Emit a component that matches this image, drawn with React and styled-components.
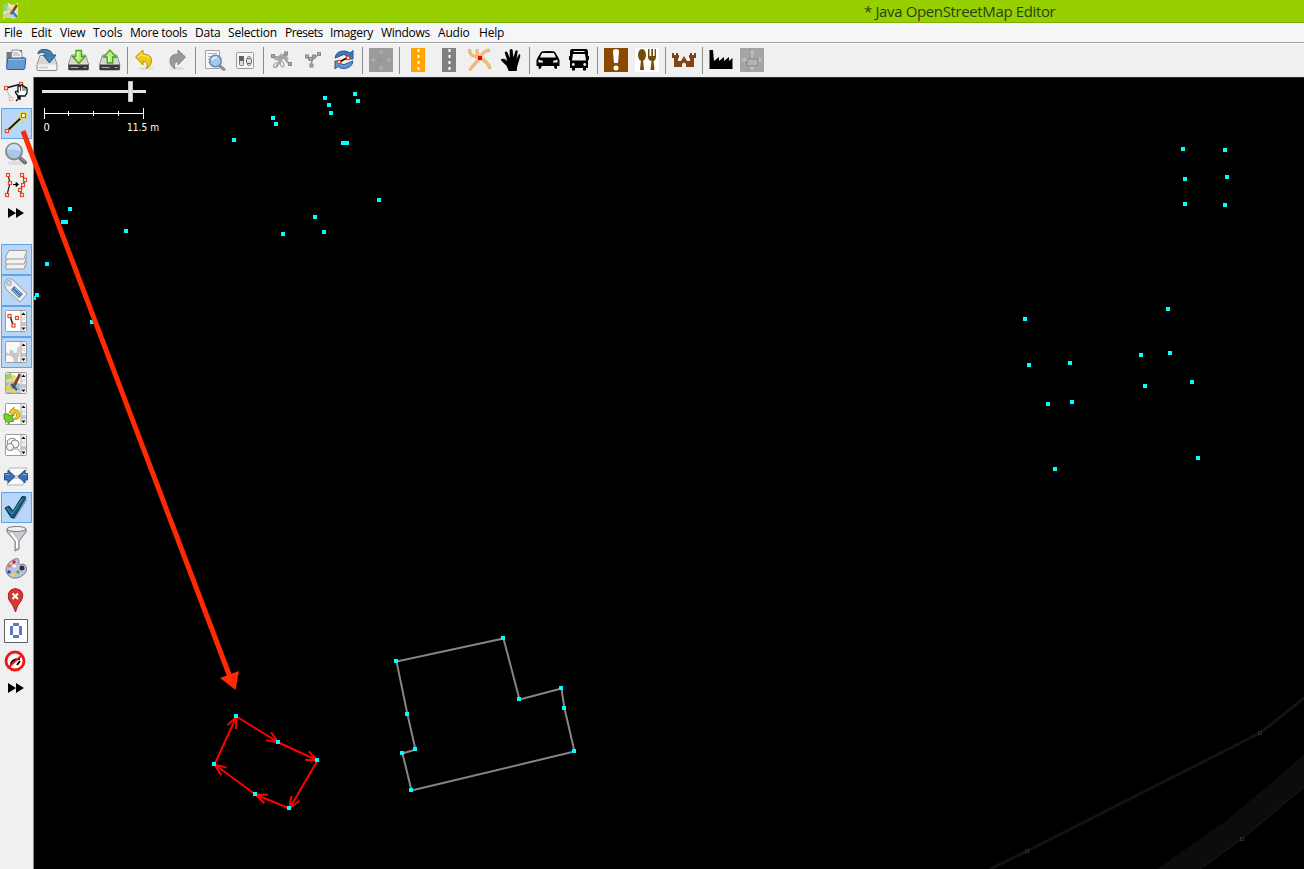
import React from "react";
import styled, { createGlobalStyle, css } from "styled-components";

const GlobalStyle = createGlobalStyle`
  * { box-sizing: border-box; }
  body { margin: 0; overflow: hidden; background: #000; }
`;

const Window = styled.div`
  position: relative;
  display: flex;
  flex-direction: column;
  width: 1304px;
  height: 869px;
  overflow: hidden;
  font-family: "Open Sans", "Noto Sans", sans-serif;
`;

const TitleBar = styled.header`
  display: flex;
  align-items: center;
  height: 23px;
  flex: none;
  padding-left: 3px;
  background: #96d000;
  border-bottom: 1px solid #78b000;
`;

const Title = styled.h1`
  margin: 0 0 0 845px;
  font-size: 15px;
  font-weight: 400;
  line-height: 22px;
  color: #2f4013;
  white-space: nowrap;
  letter-spacing: ${(p) => p.$spacing}px;
`;

const MenuBar = styled.nav`
  display: flex;
  flex: none;
  height: 20px;
  padding-left: 4px;
  background: #f5f6f8;
  border-bottom: 1px solid #a0a0a0;
`;

const MenuItem = styled.span`
  flex: none;
  width: ${(p) => p.$width}px;
  font-size: 12px;
  line-height: 19px;
  letter-spacing: ${(p) => p.$spacing}px;
  color: #000;
  white-space: nowrap;
`;

const Toolbar = styled.div`
  display: flex;
  align-items: center;
  flex: none;
  height: 34px;
  background: #f0f0f0;
  border-top: 1px solid #fff;
`;

const ToolButton = styled.div`
  display: flex;
  flex: none;
  width: 31px;
  height: 33px;
  padding: 4px 3px 5px 4px;
`;

const Separator = styled.i`
  flex: none;
  width: 1px;
  height: 27px;
  margin: 0 2px 0 3px;
  background: #8c8c8c;
`;

const Workspace = styled.main`
  display: flex;
  flex: 1;
  min-height: 0;
`;

const Sidebar = styled.aside`
  display: flex;
  flex-direction: column;
  flex: none;
  width: 34px;
  padding-left: 1px;
  background: #f0f0f0;
  border-right: 1px solid #8a8a8a;
`;

const SideButton = styled.div`
  flex: none;
  width: 31px;
  height: 31px;
  ${(p) => p.$active && css`
    background: #b8d6f8;
    box-shadow: inset 0 0 0 1px #5ea4e6;
  `}
`;

const MoreButton = styled.div`
  flex: none;
  height: 25px;
  margin: ${(p) => p.$margin};
`;

const MapView = styled.section`
  flex: 1;
  background: #000;
  border-top: 1px solid #2a2d30;
`;

const Drawing = styled.svg`
  display: block;
`;

const Annotation = styled.svg`
  position: absolute;
  left: 0;
  top: 0;
  pointer-events: none;
`;

const Icon24 = ({ children }) => (
  <Drawing width="24" height="24" viewBox="0 0 24 24" fill="none">{children}</Drawing>
);
const Icon31 = ({ children }) => (
  <Drawing width="31" height="31" viewBox="0 0 31 31" fill="none">{children}</Drawing>
);

const Node = ({ x, y, s = 3, color = "#e8481c" }) => (
  <rect x={x - s / 2} y={y - s / 2} width={s} height={s} fill="#fff" stroke={color} strokeWidth="1.2" />
);

const Drive = ({ dark }) => (
  <>
    <path d="M5 7H19L22 16V21Q22 22 21 22H3Q2 22 2 21V16Z" fill="#e9e9e9" stroke="#8b8b8b" />
    <path d="M5.5 8H18.500L21 15.500H3Z" fill="#d5d5d5" />
    {dark ? <path d="M2 16.500H22V22H2Z" fill="#343b3d" /> : <path d="M3 17H21V21H3Z" fill="#f6f6f6" />}
    {dark ? <path d="M4 19.500H12M17 19.500H20" stroke="#aaa" /> : <path d="M4.500 19H13" stroke="#aaa" strokeWidth="2" strokeDasharray="1 1" />}
  </>
);

const FolderIcon = () => (
  <Icon24>
    <path d="M2.500 4H8L9 2H18V9H20V20H2.500Z" fill="#777" />
    <path d="M8 2H15L18 5V14H7Z" fill="#f3f3f3" stroke="#8d8d8d" />
    <path d="M9 5H14M9 7H16" stroke="#a8a8a8" />
    <path d="M3.500 11Q3.500 10 4.500 10H21Q22 10 21.800 11L20.800 20.500Q20.600 21.500 19.500 21.500H3.500Q2.500 21.500 2.500 20.500Z" fill="#699bd2" stroke="#2f5f99" />
    <path d="M4.500 11.500H20.500" stroke="#9fc4ec" />
  </Icon24>
);
const OpenLocationIcon = () => (
  <Icon24>
    <g transform="translate(0 .5)"><Drive /></g>
    <path d="M3 6Q3 1.500 9 1.500Q17 1.500 17.500 7H21L14.500 15L8 7H11.500Q10.500 4.500 7 4.500Q4.500 4.500 3 6Z" fill="#4380b3" stroke="#245982" />
  </Icon24>
);
const DownloadIcon = () => (
  <Icon24>
    <g transform="translate(.5 0)"><Drive dark />
      <path d="M9.500 2.500H15V8.500H18.500L12.200 15.500L6 8.500H9.500Z" fill="#b9ec82" stroke="#4fa312" strokeWidth="1.400" />
      <path d="M11 4V10" stroke="#e4ffc5" strokeWidth="1.500" /></g>
  </Icon24>
);
const UploadIcon = () => (
  <Icon24>
    <g transform="translate(.7 0)"><Drive dark />
      <path d="M9.500 15V9H6L12.200 2L18.500 9H15V15Z" fill="#b9ec82" stroke="#4fa312" strokeWidth="1.400" />
      <path d="M11 8V13.500" stroke="#e4ffc5" strokeWidth="1.500" /></g>
  </Icon24>
);
const UndoIcon = () => (
  <Icon24>
    <ellipse cx="12" cy="20.500" rx="8" ry="1.500" fill="#ddd" />
    <path d="M1.500 9L9 2V6Q18 6 17.500 13.500Q17.300 18 12.500 20.500Q15 14.500 9 13V17Z" fill="#edcc1c" stroke="#b88e00" />
    <path d="M4 9L8 5.500V7.500Q14 7.500 15.500 11" stroke="#fff17c" />
  </Icon24>
);
const RedoIcon = () => (
  <Icon24>
    <ellipse cx="12" cy="20.500" rx="8" ry="1.500" fill="#ddd" />
    <path d="M20.500 9L13 2V6Q5 6 5 13Q5 18 10 20.500Q8 14.500 13 13V17Z" fill="#999" stroke="#858585" />
  </Icon24>
);
const SearchPageIcon = () => (
  <Icon24>
    <path d="M3.500 2.500H17.500V20.500H3.500Z" fill="#f7f7f7" stroke="#a5a5a5" />
    <path d="M6 5.500H15M6 8.500H10M6 11.500H9M6 14.500H9" stroke="#b5b5b5" />
    <path d="M18 18L22 21.500" stroke="#909090" strokeWidth="3" strokeLinecap="round" />
    <circle cx="13.500" cy="13" r="5.800" fill="#a9c8eb" stroke="#658abb" strokeWidth="1.500" />
    <path d="M10 12Q11 9 15 9.500" stroke="#edf5ff" strokeWidth="1.500" />
  </Icon24>
);
const PreferencesIcon = () => (
  <Icon24>
    <rect x="3.500" y="4.500" width="17" height="16" rx="1" fill="#f5f5f5" stroke="#9c9c9c" />
    <rect x="6.500" y="8.500" width="4" height="9" rx="1" fill="#ddd" stroke="#777" />
    <rect x="6" y="8" width="5" height="5" fill="#616161" />
    <rect x="14.500" y="8.500" width="3" height="9" rx="1" fill="#ddd" stroke="#777" />
    <rect x="13.500" y="10.500" width="5" height="5" rx="1" fill="#ddd" stroke="#666" />
  </Icon24>
);
const SplitIcon = () => (
  <Icon24>
    <path d="M2 8L14 10L20 17M16 5L6 19M9 11L16 5L17 14" stroke="#999" strokeWidth="1.500" />
    <path d="M4 10L11 13M12 6L7 11M12 9Q16 8 18 11" stroke="#a8a8a8" strokeWidth="2" />
    <ellipse cx="6" cy="17" rx="3" ry="1.700" transform="rotate(-45 6 17)" stroke="#999" />
    <ellipse cx="12" cy="16" rx="1.700" ry="3" transform="rotate(-20 12 16)" stroke="#999" />
    {[[3, 8], [16, 5.500], [20, 16]].map(([x, y]) => <rect key={x} x={x - 1.500} y={y - 1.500} width="3" height="3" fill="#aaa" stroke="#888" />)}
  </Icon24>
);
const CombineIcon = () => (
  <Icon24>
    <path d="M6 9L11 12L18 6M11 12L10 18M7 12L14 7" stroke="#999" strokeWidth="1.500" />
    {[[6, 8.500], [10, 11], [10.500, 17.500], [13, 8.500], [18, 6]].map(([x, y]) => <rect key={x} x={x - 1.500} y={y - 1.500} width="3" height="3" fill="#aaa" stroke="#888" />)}
  </Icon24>
);
const SyncIcon = () => (
  <Icon24>
    <path d="M3 10Q4 3 12 3Q16 3 18 5L21 2.500V11H13L15.500 8Q12 5 8 8Q6 9 3 10Z" fill="#3e76bb" stroke="#28578f" />
    <path d="M21 13Q20 20 12 20.500Q8 20.500 6 18.500L3 21V13H10L8 15.500Q12 18 16 15Z" fill="#6097d6" stroke="#28578f" />
    <path d="M7 14L17 9" stroke="#000" strokeWidth="1.500" />
    <Node x={7} y={14} /><Node x={16} y={10} />
  </Icon24>
);
const MutedPadIcon = ({ box }) => (
  <Icon24>
    <path d="M0 0H24V24H0Z" fill={box ? "#a5a5a5" : "#9b9b9b"} />
    <path d="M0 18Q8 9 24 13M8 24Q12 12 10 0" stroke="#959595" />
    <path d="M12 1.500L15 5H13V7H11V5H9ZM12 22.500L9 19H11V17H13V19H15ZM1.500 12L5 9V11H7V13H5V15ZM22.500 12L19 15V13H17V11H19V9Z" fill={box ? "#bdbdbd" : "#acacac"} />
    {box && <><path d="M11 5H13V10H11Z" fill="#bdbdbd" /><path d="M7 13L9 11H18V16L16 18H7Z" fill="#b4b4b4" stroke="#858585" /></>}
  </Icon24>
);
const RoadIcon = ({ color }) => (
  <Icon24>
    <path d="M5 0H19V24H5Z" fill={color} />
    <path d="M12.500 1V24" stroke="#fff" strokeWidth="2" strokeDasharray="3 3" />
  </Icon24>
);
const JunctionIcon = () => (
  <Icon24>
    <path d="M1.500 1Q2 8 6 8L12 10M9 1Q8.500 7 12 10M12 10Q20 13 22 21M12 10L1.500 22M12 10Q14 5 18 3L22 2" stroke="#d9a064" strokeWidth="3" />
    <path d="M1.500 1Q2 8 6 8L12 10M9 1Q8.500 7 12 10M12 10Q20 13 22 21M12 10L1.500 22M12 10Q14 5 18 3L22 2" stroke="#f8bd7b" strokeWidth="2" />
    <path d="M10 8H14V12H10Z" fill="#f00" />
  </Icon24>
);
const HandIcon = () => (
  <Icon24>
    <path d="M9 23L7 18L1 12Q2 10 5 11L7.500 13L5 4.500Q6.500 2.500 8 5L10 10L10 2Q11.500 0 13 2L13.500 9.500L16 2.500Q17.500 1.500 18 3.500L16.800 11L19 6.500Q21 5.500 20.500 8.500L18 17Q17 20 17 23Z" transform="translate(.7)" fill="#000" />
  </Icon24>
);
const CarIcon = () => (
  <Icon24>
    <path d="M2 9L5 4Q6 3 12 3Q18 3 19 4L22 9L23.500 12V18H21V20.500Q18 22 18 18H5.500Q5.500 22 2.500 20.500V18H.5V12Z" fill="#000" />
    <path d="M6 5H18L20 9.500H4Z" fill="#f0f0f0" />
    <path d="M2.500 11.500L7 13V14.500H2.500ZM21.500 11.500L17 13V14.500H21.500Z" fill="#f0f0f0" />
  </Icon24>
);
const BusIcon = () => (
  <Icon24>
    <path d="M5 1H19Q21 1 21 4V8H22V12H21V20H19V22.500H16V20H8V22.500H5V20H3V12H2V8H3V4Q3 1 5 1Z" fill="#000" />
    <path d="M6.500 3H17.500V4H6.500ZM6 6H18L19 12.500H5Z" fill="#f0f0f0" />
    <circle cx="6.300" cy="16.500" r="1.400" fill="#f0f0f0" /><circle cx="17.700" cy="16.500" r="1.400" fill="#f0f0f0" />
  </Icon24>
);
const WarningIcon = () => (
  <Icon24>
    <path d="M0 0H24V24H0Z" fill="#8c4a00" />
    <path d="M9 3.500Q9 1 12 1Q15 1 15 3.500L14 15H10Z" fill="#fff" /><circle cx="12" cy="20" r="2.500" fill="#fff" />
  </Icon24>
);
const FoodIcon = () => (
  <Icon24>
    <path d="M0 0H24V24H0Z" fill="#fff" />
    <ellipse cx="7" cy="7" rx="4" ry="6" fill="#734a08" />
    <path d="M6 12H8L9 22H5Z" fill="#734a08" />
    <path d="M13 1H14.500V8H16.300V1H18V8H19.700V1H21V9Q21 12 18.500 13L19.500 22H15.500L16.500 13Q13 12 13 9Z" fill="#734a08" />
  </Icon24>
);
const CastleIcon = () => (
  <Icon24>
    <path d="M0 5H2V7H4V5H6V7H7V10H6V13H9L12 8L15 13H18V10H17V7H18V5H20V7H22V5H24V10H22V19H14V16Q12 13 10 16V19H2V10H0Z" fill="#834415" />
  </Icon24>
);
const FactoryIcon = () => (
  <Icon24><path d="M.5 21V2H4L5 13L10 9V13L15 9V13L20 9V13L23.500 10V21Z" fill="#000" /></Icon24>
);

const toolbarGroups = [
  [<FolderIcon />, <OpenLocationIcon />, <DownloadIcon />, <UploadIcon />],
  [<UndoIcon />, <RedoIcon />],
  [<SearchPageIcon />, <PreferencesIcon />],
  [<SplitIcon />, <CombineIcon />, <SyncIcon />],
  [<MutedPadIcon />],
  [<RoadIcon color="#ffa500" />, <RoadIcon color="#808080" />, <JunctionIcon />, <HandIcon />],
  [<CarIcon />, <BusIcon />],
  [<WarningIcon />, <FoodIcon />],
  [<CastleIcon />],
  [<FactoryIcon />, <MutedPadIcon box />],
];

const SelectToolIcon = () => (
  <Icon31>
    <path d="M5 11L20 7" stroke="#111" strokeWidth="1.500" /><path d="M5 11L10 22" stroke="#c8c8c8" strokeWidth="1.500" />
    <Node x={10} y={22} color="#efb6ac" /><Node x={5} y={11} /><Node x={20} y={7} />
    <path d="M17 19L14.500 15.500Q14 13.500 16.500 14.500L17 15V9.500Q18.500 8 19.500 9.500V8.500Q21 7 22 8.500V9.500Q23.500 8.500 24 10.500Q26 10 26 12V16L24 19Z" fill="#fff" stroke="#111" strokeWidth="1.300" />
    <path d="M19.500 9V14M22 9V14M24 10V14" stroke="#222" strokeWidth=".8" />
    <path d="M15 24L19 20M16 20H19V23" stroke="#000" strokeWidth="1.300" />
  </Icon31>
);
const DrawToolIcon = () => (
  <Icon31>
    <path d="M7 22L22.500 7.500" stroke="#dfe16a" strokeWidth="4" /><path d="M6 23L22.500 7.500" stroke="#111133" strokeWidth="1.800" />
    <path d="M19 4H26V11H19Z" fill="#e0df62" />
    <Node x={6} y={23} /><Node x={22.500} y={7.500} s={4} color="#c36a18" />
  </Icon31>
);
const ZoomToolIcon = () => (
  <Icon31>
    <ellipse cx="14" cy="24" rx="8" ry="2" fill="#ddd" />
    <path d="M19 19L24 23.500" stroke="#6e6e6e" strokeWidth="4" strokeLinecap="round" />
    <path d="M20 19L24 22.500" stroke="#aaa" strokeWidth="1" />
    <circle cx="13" cy="12.500" r="8" fill="#a9c7e7" stroke="#858b91" strokeWidth="2" />
    <path d="M6 12Q10 9 20 12A7 7 0 0 0 6 12Z" fill="#ccdef1" />
  </Icon31>
);
const ImproveToolIcon = () => {
  const left = [[7, 5], [9, 13], [6, 25]];
  const right = [[21, 5], [24, 10], [22, 15], [19, 20], [21, 25]];
  return (
    <Icon31>
      <path d={`M${left.join("L")}M${right.join("L")}`} stroke="#222" strokeWidth="1.200" />
      {[...left, ...right].map(([x, y]) => <Node key={`${x}-${y}`} x={x} y={y} />)}
      <path d="M12 14.500H17M15 12.500L17.500 14.500L15 16.500Z" stroke="#000" fill="#000" />
    </Icon31>
  );
};
const MoreIcon = () => (
  <Drawing width="31" height="25" viewBox="0 0 31 25"><path d="M7 7L15 12L7 17ZM15 7L23 12L15 17Z" fill="#000" /></Drawing>
);
const LayersIcon = () => (
  <Icon31>
    {[16.500, 11.500, 6.500].map((y) => (
      <path key={y} d={`M8 ${y}H24.500Q26 ${y} 25.500 ${y + 1.500}L23 ${y + 8.500}H6Q4 ${y + 8} 4.500 ${y + 6.500}Z`} fill="#f2f2f2" stroke="#999" />
    ))}
  </Icon31>
);
const TagIcon = () => (
  <Icon31>
    <path d="M4 7L6 4Q10 3 12 5L26 19L19 27L5 14Q3 11 4 7Z" fill="#eee" stroke="#9b9b9b" />
    <circle cx="8" cy="8" r="2.500" fill="#c4daef" stroke="#9aa7b8" />
    <path d="M13 11L22 19L18 23L10 15Z" fill="#4e7caf" />
    <path d="M12 15L18 21M14 13L20 19" stroke="#a9c6e6" />
  </Icon31>
);
const ListFrame = ({ children, fill = "#fff" }) => (
  <Icon31>
    <rect x="4.500" y="4.500" width="21" height="21" rx="1" fill={fill} stroke="#9b9b9b" />
    {children}
    <path d="M20 5H25V25H20Z" fill="#f5f5f5" /><path d="M20 16H25V20H20Z" fill="#c8c8c8" />
    <path d="M20 5V25" stroke="#aaa" />
    <path d="M20.500 9L22.500 6.500L24.500 9ZM20.500 21.500H24.500L22.500 24Z" fill="#000" />
    <path d="M21 11L24 14M24 11L21 14" stroke="#ccc" />
  </Icon31>
);
const PathListIcon = () => (
  <ListFrame><path d="M9 10L12 19" stroke="#222" strokeWidth="1.500" /><Node x={8.500} y={10} /><Node x={16} y={12} /><Node x={12.500} y={19.500} /></ListFrame>
);
const GearListIcon = () => (
  <ListFrame fill="#f8f8f8">
    <path d="M5 15L8 17L9 13H12L13 16L17 15L19 18L17 20V25H5Z" fill="#c8c8c8" />
    <path d="M5 19Q12 17 13 25H5Z" fill="#f8f8f8" />
    <path d="M16 11L19 9V16L16 15Z" fill="#cfcfcf" />
  </ListFrame>
);
const MapListIcon = () => (
  <ListFrame>
    <path d="M5 8L9 5L15 8V25H5Z" fill="#e1dda6" /><path d="M5 6L10 5L11 10L5 12Z" fill="#9ad268" />
    <path d="M5 15Q12 11 19 16V25H5Z" fill="#98bddf" /><path d="M5 18L14 25M13 8L5 24M5 23H19" stroke="#f2cf55" strokeWidth="2" />
    <path d="M12 20L19 6" stroke="#87451f" strokeWidth="3" /><path d="M10 16L16 22" stroke="#285886" strokeWidth="2" />
  </ListFrame>
);
const HistoryListIcon = () => (
  <ListFrame>
    <path d="M8 13L13 8V11Q19 10 19 16Q18 22 12 20Q17 18 15 14H13V17Z" fill="#eec92b" stroke="#bd9b13" />
    <path d="M3 15L8 15V17L12 16L11 20L13 22L8 23V25L3 20Z" fill="#73d12e" stroke="#4f9e1f" />
  </ListFrame>
);
const RelationListIcon = () => (
  <ListFrame>
    <path d="M10 8L14 9V16L7 17L6 11Z" fill="#f6f6f6" stroke="#858585" />
    <circle cx="14" cy="14" r="4" fill="#f6f6f6" stroke="#858585" />
    <circle cx="9" cy="17" r="3.500" fill="#f6f6f6" stroke="#858585" />
    <path d="M10 21Q12 18 17 19L19 22" stroke="#999" />
  </ListFrame>
);
const ConflictIcon = () => (
  <Icon31>
    <path d="M9 7H26L22 15H6ZM8 17H24L22 24H6Z" fill="#fafafa" stroke="#b3b3b3" />
    <path d="M3.500 12.500H7V9L14 15.500L7 22V19H3.500ZM26.500 12.500H24V9L17 15.500L24 22V19H26.500Z" fill="#3d70b4" stroke="#285087" />
    <path d="M4 13.500H8M22 13.500H26" stroke="#87afe3" />
  </Icon31>
);
const CheckIcon = () => (
  <Icon31>
    <path d="M6 17L9 15L13 20L23 5L26 8L14 27H11Z" fill="#7f96a6" />
    <path d="M4 16L8 14L12 19L21 4.500L25 5L13 25.500H10Z" fill="#145e88" stroke="#102f46" />
    <path d="M6 16L11 22L21 7" stroke="#4799b7" />
  </Icon31>
);
const FilterIcon = () => (
  <Icon31>
    <path d="M6 6Q15 10 25 6V9L18 18V26L14 28V18L6 9Z" fill="#c9c9d1" stroke="#777780" />
    <ellipse cx="15.500" cy="6" rx="9.500" ry="2.500" fill="#f1f1f4" stroke="#777780" />
    <path d="M10 10L16 18V25" stroke="#fff" strokeWidth="2" />
  </Icon31>
);
const PaletteIcon = () => (
  <Icon31>
    <path d="M14 5Q18 3 18 8Q17 12 22 10Q27 11 25 18Q20 25 12 24Q5 22 5 15Q6 8 14 5Z" fill="#bdbfdb" stroke="#777b9b" />
    <circle cx="13" cy="8" r="1.700" fill="#d3222a" /><circle cx="8.500" cy="12" r="1.700" fill="#e57732" />
    <circle cx="8" cy="18" r="1.700" fill="#273fd0" /><circle cx="12" cy="21" r="1.700" fill="#f1df20" />
    <circle cx="17" cy="18" r="1.700" fill="#4aac27" /><circle cx="21" cy="14" r="2.500" fill="#292f3d" />
    <circle cx="13.500" cy="12" r="1.500" fill="#fff" />
  </Icon31>
);
const PinIcon = () => (
  <Icon31>
    <path d="M14.500 27Q13 21 8 15Q6 8 10 5Q14 2 19 5Q24 9 20 16Q16 20 14.500 27Z" fill="#d93633" stroke="#a6201f" />
    <path d="M11.500 8.500L17 14M17 8.500L11.500 14" stroke="#fff" strokeWidth="2" />
  </Icon31>
);
const ZeroIcon = () => (
  <Icon31>
    <path d="M3.500 3.500H26.500V26.500H3.500Z" fill="#fff" stroke="#606060" />
    <path d="M12 7H18V10H21V19H18V22H12V19H9V10H12ZM12 10V19H18V10Z" fillRule="evenodd" fill="#6079c5" />
  </Icon31>
);
const NoTurnIcon = () => (
  <Icon31>
    <circle cx="14" cy="14" r="9" fill="#fff" stroke="#f21313" strokeWidth="2.800" />
    <path d="M10 18Q10 12 19 12M16 18L19 14" stroke="#000" strokeWidth="2" />
    <path d="M8 20L21 8" stroke="#f21313" strokeWidth="2" />
  </Icon31>
);

const modes = [[<SelectToolIcon />], [<DrawToolIcon />, true], [<ZoomToolIcon />], [<ImproveToolIcon />]];
const panels = [
  [<LayersIcon />, true], [<TagIcon />, true], [<PathListIcon />, true], [<GearListIcon />, true],
  [<MapListIcon />], [<HistoryListIcon />], [<RelationListIcon />], [<ConflictIcon />],
  [<CheckIcon />, true], [<FilterIcon />], [<PaletteIcon />], [<PinIcon />], [<ZeroIcon />], [<NoTurnIcon />],
];

const menu = [
  ["File", 27], ["Edit", 29], ["View", 33], ["Tools", 37, -0.1], ["More tools", 65, -0.3], ["Data", 33], ["Selection", 57],
  ["Presets", 45, -0.5], ["Imagery", 51, -0.35], ["Windows", 57, -0.3], ["Audio", 41], ["Help", 40],
];

const points = [
  [234, 140], [273, 118], [276, 124], [325, 98], [329, 105], [331, 113], [355, 94], [358, 101], [343, 143], [347, 143],
  [379, 200], [315, 217], [324, 232], [283, 234], [126, 231], [70, 209], [63, 222], [66, 222], [47, 264], [37, 295],
  [34, 298], [92, 322], [1183, 149], [1225, 150], [1185, 179], [1227, 177], [1185, 204], [1225, 205], [1025, 319],
  [1168, 309], [1029, 365], [1070, 363], [1048, 404], [1072, 402], [1141, 355], [1170, 353], [1145, 386], [1192, 382],
  [1055, 469], [1198, 458],
];
const building = [[503, 638], [519, 699], [561, 688], [564, 708], [574, 751], [411, 790], [402, 753], [415, 749], [407, 714], [396, 661]];
const way = [[236, 716], [278, 742], [317, 760], [289, 808], [255, 794], [214, 764]];

const segmentPath = ([x1, y1], [x2, y2]) => {
  const angle = Math.atan2(y2 - y1, x2 - x1);
  const wing = (turn) => `${x2 - 12.500 * Math.cos(angle + turn)} ${y2 - 12.500 * Math.sin(angle + turn)}`;
  return `M${x1} ${y1}L${x2} ${y2}M${wing(0.380)}L${x2} ${y2}L${wing(-0.380)}`;
};

const MapDrawing = () => (
  <Drawing width="1270" height="791" viewBox="34 78 1270 791" fill="none">
    <path d="M990 869L1027 851L1260 733L1304 698" stroke="#131313" strokeWidth="3" />
    <path d="M1157 869L1227 820L1304 755V787L1242 839L1200 869Z" fill="#0c0c0c" />
    <path d="M1200 869L1242 839L1304 787" stroke="#1c1c1c" />
    {[[1027, 851], [1260, 733], [1242, 839]].map(([x, y]) => <rect key={x} x={x - 1.500} y={y - 1.500} width="3" height="3" stroke="#2a2a2a" />)}
    <path d={`M${building.join("L")}Z`} stroke="#848484" strokeWidth="2" transform="translate(.5 .5)" />
    {way.map((p, i) => <path key={i} d={segmentPath(p, way[(i + 1) % way.length])} stroke="#f00" strokeWidth="2" transform="translate(.5 .5)" />)}
    {[...points, ...building, ...way].map(([x, y], i) => <rect key={i} x={x - 2} y={y - 2} width="4" height="4" fill="#0ff" />)}
    <path d="M42 90H146V93H42Z" fill="#e6e6e6" />
    <path d="M128.500 81.500H132.500V101.500H128.500Z" fill="#e6e6e6" stroke="#c5c5c5" />
    <path d="M44.500 108V119M143.500 108V119M44 113.500H144M68.500 111V116M93.500 111V116M118.500 111V116" stroke="#fff" />
    <g fill="#fff" fontFamily='"DejaVu Sans Condensed", "DejaVu Sans", sans-serif' fontSize="11">
      <text x="43.500" y="131">0</text>
      <text x="127" y="131" textLength="32" lengthAdjust="spacingAndGlyphs">11.5 m</text>
    </g>
  </Drawing>
);

const AppIcon = () => (
  <Drawing width="16" height="16" viewBox="0 0 16 16" fill="none">
    <path d="M0 2L5 0L10 2L15 0V14L10 16L5 14L0 16Z" fill="#e2e7c2" />
    <path d="M0 2L5 0V7L0 9Z" fill="#8fd184" /><path d="M0 12L5 9L15 12V15H0Z" fill="#b4cfdd" />
    <path d="M1 15L13 5M4 4L11 11" stroke="#eccb73" strokeWidth="2" />
    <path d="M8 11L14 2" stroke="#87411c" strokeWidth="2.500" /><path d="M9 8L14 14" stroke="#3478ae" strokeWidth="2" />
  </Drawing>
);

export default function App() {
  return (
    <Window>
      <GlobalStyle />
      <TitleBar><AppIcon /><Title $spacing={-0.37}>* Java OpenStreetMap Editor</Title></TitleBar>
      <MenuBar>
        {menu.map(([label, width, spacing = -0.2]) => <MenuItem key={label} $width={width} $spacing={spacing}>{label}</MenuItem>)}
      </MenuBar>
      <Toolbar>
        {toolbarGroups.map((group, g) => (
          <React.Fragment key={g}>
            {g > 0 && <Separator />}
            {group.map((icon, i) => <ToolButton key={i}>{icon}</ToolButton>)}
          </React.Fragment>
        ))}
      </Toolbar>
      <Workspace>
        <Sidebar>
          {modes.map(([icon, active], i) => <SideButton key={i} $active={active}>{icon}</SideButton>)}
          <MoreButton $margin="0 0 18px"><MoreIcon /></MoreButton>
          {panels.map(([icon, active], i) => <SideButton key={i} $active={active}>{icon}</SideButton>)}
          <MoreButton $margin="-2px 0 0"><MoreIcon /></MoreButton>
        </Sidebar>
        <MapView><MapDrawing /></MapView>
      </Workspace>
      <Annotation width="1304" height="869" viewBox="0 0 1304 869">
        <path d="M23 131L230 677" stroke="#ff2a00" strokeWidth="5" />
        <path d="M220 678L239 671L235.500 690Z" fill="#ff2a00" />
      </Annotation>
    </Window>
  );
}
